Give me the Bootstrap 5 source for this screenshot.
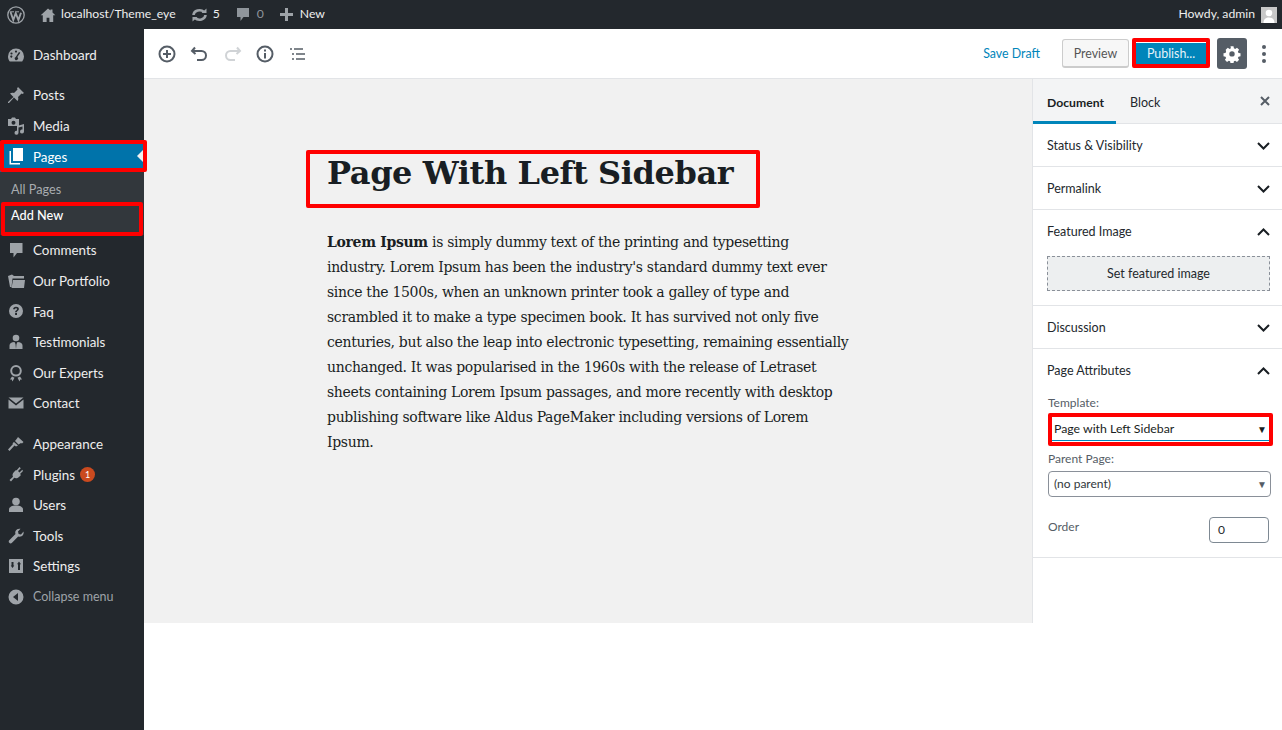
<!DOCTYPE html>
<html lang="en">
<head>
<meta charset="UTF-8">
<title>Add New Page</title>
<link href="https://cdn.jsdelivr.net/npm/bootstrap@5.3.0/dist/css/bootstrap.min.css" rel="stylesheet">
<style>
html, body { height: 730px; overflow: hidden; }
body { font-family: "Lato", "Open Sans", sans-serif; background: #fff; color: #23282d; position: relative; }
.admin-bar { height: 29px; background: #23282d; color: #eee; font-size: 12.2px; padding: 0 5px 0 7px; }
.admin-bar svg { display: block; flex: none; }
.bar-muted { color: #8f959b; }
.gap-home { margin-left: 14.5px; }
.gap-site { margin-left: 5.5px; }
.gap-item { margin-left: 15px; }
.gap-num { margin-left: 5px; }
.gap-icon { margin-left: 16px; }
.gap-after { margin-left: 7px; }
.gap-avatar { margin-left: 6px; }
.shell { height: 701px; }
.side-menu { width: 144px; background: #23282d; flex: none; padding-top: 11px; font-size: 13.4px; color: #eee; }
.menu-row { height: 30.6px; padding: 0 0 0 33px; position: relative; white-space: nowrap; }
.menu-row svg { position: absolute; left: 7px; top: 6px; width: 18px; height: 18px; fill: #9ea3a8; }
.menu-gap { height: 9.4px; }
.menu-gap-wide { height: 10px; }
.menu-row.is-current { background: #0073aa; color: #fff; height: 31px; }
.menu-row.is-current svg { fill: #fff; }
.menu-row.is-current::after { content: ""; position: absolute; right: 0; top: 8px; border: 7px solid transparent; border-right-color: #f1f1f1; border-left-width: 0; }
.sub-menu { background: #32373c; height: 63px; padding: 8px 0 0 11px; font-size: 12.7px; line-height: 18px; }
.sub-menu div:first-child { color: #a8acb0; margin-bottom: 8px; }
.sub-menu div:last-child { color: #fff; font-weight: 500; }
.plugin-count { width: 15px; height: 15px; border-radius: 50%; background: #ca4a1f; color: #fff; font-size: 9px; line-height: 15px; text-align: center; margin-left: 5px; }
.collapse-row { color: #9ea3a8; font-size: 12.5px; }
.editor { min-width: 0; }
.tool-bar { height: 50px; background: #fff; border-bottom: 1px solid #e2e4e7; padding: 0 16px 0 12px; flex: none; }
.tool-icons { gap: 10.5px; }
.tool-icons svg { width: 22px; height: 22px; fill: none; stroke: #555d66; stroke-width: 2; display: block; }
.tool-icons .icon-off { stroke: #d0d3d6; }
.tool-icons .icon-list { stroke-width: 1.7; }
.save-link { color: #0085ba; font-size: 12.4px; margin-right: 22px; padding-top: 1px; }
.preview-btn { height: 29px; width: 67px; font-size: 12.4px; color: #555; background: #f7f7f7; border: 1px solid #ccc; border-bottom-width: 2px; border-radius: 3px; padding-top: 2px; }
.publish-btn { height: 22px; width: 70px; font-size: 12.4px; color: #e6f3f9; background: #0085ba; margin-left: 7px; padding-top: 2px; }
.gear-btn { width: 30px; height: 31px; background: #555d66; border-radius: 3px; margin-left: 11px; }
.dots { width: 4px; margin-left: 15px; gap: 3px; }
.dots i { width: 4px; height: 4px; border-radius: 50%; background: #555d66; display: block; }
.work-area { height: 544px; background: #f1f1f1; flex: none; }
.canvas { min-width: 0; padding: 72px 0 0 183px; font-family: "DejaVu Serif", "Liberation Serif", serif; color: #191e23; }
.page-title { font-size: 32px; font-weight: 700; line-height: 44px; margin: 0 0 35px; letter-spacing: -.4px; white-space: nowrap; }
.page-copy { font-size: 14px; line-height: 25px; margin: 0; white-space: nowrap; letter-spacing: -.32px; }
.doc-panel { width: 250px; flex: none; background: #fff; border-left: 1px solid #e2e4e7; font-size: 12.5px; color: #23282d; }
.panel-tabs { height: 45px; background: #f3f4f5; border-bottom: 1px solid #e2e4e7; padding-right: 12px; }
.tab-on { width: 83px; height: 45px; padding: 15px 0 0 14px; border-bottom: 3px solid #0085ba; font-weight: 700; font-size: 12.2px; color: #191e23; }
.tab-off { padding: 15px 0 0 14px; }
.tab-close { margin-top: 17px; }
.panel-row { height: 43px; padding: 2px 12px 0 14px; border-bottom: 1px solid #e2e4e7; }
.panel-head { height: 43px; padding: 1px 12px 0 14px; }
.chev { width: 13px; height: 8px; fill: none; stroke: #191e23; stroke-width: 2; }
.panel-body { border-bottom: 1px solid #e2e4e7; }
.attr-body { height: 209px; }
.image-btn { height: 35px; margin: 3px 12px 14px 14px; background: #edeff0; border: 1px dashed #8a9099; color: #23282d; line-height: 33px; text-align: center; }
.field-label { font-size: 12px; color: #555d66; line-height: 16px; }
.label-template { padding: 3px 0 0 15px; }
.label-parent { padding: 10px 0 0 15px; }
.template-select { height: 25px; margin: 5px 13px 0 18px; border-bottom: 1px solid #0085ba; padding: 2px 2px 0 3px; font-size: 12.3px; color: #191e23; }
.parent-select { height: 26px; margin: 4px 11px 0 15px; border: 1px solid #8a9099; border-radius: 4px; padding: 0 3px 0 5px; font-size: 12px; color: #32373c; }
.select-arrow { font-size: 10px; }
.arrow-muted { color: #555d66; }
.order-row { padding: 20px 13px 0 15px; }
.order-label { margin-top: -7px; }
.order-input { width: 60px; height: 26px; border: 1px solid #7e8993; border-radius: 4px; padding-left: 8px; font-size: 12px; line-height: 24px; }
.red-mark { position: absolute; border: 4px solid #f00; border-radius: 2px; pointer-events: none; }
.mark-pages { left: 0; top: 140px; width: 147px; height: 32px; }
.mark-add { left: 1px; top: 202px; width: 142px; height: 34px; }
.mark-title { left: 306px; top: 150px; width: 454px; height: 58px; }
.mark-publish { left: 1132px; top: 38px; width: 78px; height: 30px; }
.mark-template { left: 1048px; top: 413px; width: 225px; height: 33px; }
</style>
</head>
<body>
<!-- Admin bar -->
<div class="admin-bar d-flex align-items-center">
  <svg width="18" height="18" viewBox="0 0 18 18" fill="none" stroke="#9ea3a8"><circle cx="9" cy="9" r="8.200" stroke-width="1.300"/><path d="M3.500 6l2.800 8 2.400-6.800L11.400 14l2.600-7.200" stroke-width="1.900"/><path d="M3 5.800h4M9 5.800h3" stroke-width="1"/></svg>
  <svg class="gap-home" width="16" height="16" viewBox="0 0 16 16" fill="#9ea3a8"><path d="M8 1.500L.7 8.300h2.100V15h3.800v-4.200h2.800V15h3.800V8.300h2.100L12.500 5.400V2.500h-2v1.100z"/></svg>
  <span class="gap-site">localhost/Theme_eye</span>
  <svg class="gap-item" width="17" height="16" viewBox="0 0 17 16" fill="none" stroke="#9ea3a8" stroke-width="2.600"><path d="M2.500 8a6 5 0 0 1 10.500-3M14.500 8a6 5 0 0 1-10.500 3"/><path d="M10.500 6h5V1.500zM6.500 10h-5v4.500z" fill="#9ea3a8" stroke="none"/></svg>
  <span class="gap-num">5</span>
  <svg class="gap-icon" width="14" height="15" viewBox="0 0 14 15" fill="#8f959b"><path d="M1 1h12v9H7.500L4.500 14v-4H1z"/></svg>
  <span class="bar-muted gap-after">0</span>
  <svg class="gap-icon" width="13" height="13" viewBox="0 0 13 13" fill="#9ea3a8"><path d="M5 0h3v5h5v3H8v5H5V8H0V5h5z"/></svg>
  <span class="gap-after">New</span>
  <span class="ms-auto">Howdy, admin</span>
  <svg class="gap-avatar" width="16" height="16" viewBox="0 0 16 16"><rect width="16" height="16" fill="#c8c8c8"/><circle cx="8" cy="6" r="3.300" fill="#fff"/><path d="M2.500 16c0-4 2.500-5.500 5.500-5.500s5.500 1.500 5.500 5.500z" fill="#fff"/></svg>
</div>

<div class="shell d-flex">
  <!-- Left menu -->
  <nav class="side-menu">
    <div class="menu-row d-flex align-items-center"><svg viewBox="0 0 18 18"><path d="M9 2.500a8 8 0 0 0-8 8c0 1.900.7 3.600 1.800 5h12.400a8 8 0 0 0 1.800-5 8 8 0 0 0-8-8zm0 2a1.100 1.100 0 1 1 0 2.200 1.100 1.100 0 0 1 0-2.200zM4.500 6.400a1.100 1.100 0 1 1 0 2.200 1.100 1.100 0 0 1 0-2.200zm8.800.3l-3 4.300a1.700 1.700 0 1 1-1.600-.100l3.300-5zM3.200 10.500a1.100 1.100 0 1 1 0 .1z"/></svg>Dashboard</div>
    <div class="menu-gap"></div>
    <div class="menu-row d-flex align-items-center"><svg viewBox="0 0 18 18"><path d="M11 1l6 6-1.500 1-1-.5L11 11c.6 1.500.3 3-.5 4L7 11.500 2 17l-1 0 0-1 5.500-5L3 7.500c1-.8 2.500-1.100 4-.5l3.500-3.500-.5-1z"/></svg>Posts</div>
    <div class="menu-row d-flex align-items-center"><svg viewBox="0 0 18 18"><path d="M1 2h3l1-1.500h3L9 2h3v7H1zm5.500 1.800a2 2 0 1 0 0 4 2 2 0 0 0 0-4zM17 7v7.500a2 2 0 1 1-1.500-1.900V9.500l-4 1v5.200a2 2 0 1 1-1.500-1.900V9z"/></svg>Media</div>
    <div class="menu-row is-current d-flex align-items-center"><svg viewBox="0 0 18 18"><path d="M6 1h10v13H6z"/><path d="M4 4v12h9v1.500H2.500V4z"/></svg>Pages</div>
    <div class="sub-menu"><div>All Pages</div><div>Add New</div></div>
    <div class="menu-row d-flex align-items-center"><svg viewBox="0 0 18 18"><path d="M3 2h12.500v10H10l-3.500 4.500V12H3z"/></svg>Comments</div>
    <div class="menu-row d-flex align-items-center"><svg viewBox="0 0 18 18"><path d="M1 4l4-1.500 2 1.500h10v2.500H5.500L4.500 15H3zM6 8h12l-1 8H4.500z"/></svg>Our Portfolio</div>
    <div class="menu-row d-flex align-items-center"><svg viewBox="0 0 18 18"><path fill-rule="evenodd" d="M9 2a7 7 0 1 1 0 14A7 7 0 0 1 9 2zm-.9 9v2h1.900v-2zM9 4.800c-1.700 0-2.800 1-2.900 2.500h1.800c.1-.6.500-1 1.100-1 .6 0 1 .4 1 .9 0 1-2 1.300-2 3h1.800c0-1.200 2.100-1.500 2.100-3.200 0-1.400-1.200-2.200-2.900-2.200z"/></svg>Faq</div>
    <div class="menu-row d-flex align-items-center"><svg viewBox="0 0 18 18"><circle cx="9" cy="5" r="3.300"/><path d="M2.500 16v-3.500c0-2 2-3.200 5-3.400l1 2 .5 5zM15.500 16v-3.500c0-2-2-3.200-5-3.400l-1 2-.5 5z"/></svg>Testimonials</div>
    <div class="menu-row d-flex align-items-center"><svg viewBox="0 0 18 18"><path fill-rule="evenodd" d="M9 1a5.800 5.800 0 1 1 0 11.600A5.800 5.800 0 0 1 9 1zm0 2a3.800 3.800 0 1 0 0 7.600A3.800 3.800 0 0 0 9 3zM5 12.500l2.500 1.200-2 3.800-.8-2H3zM13 12.500l-2.500 1.200 2 3.800.8-2H15z"/></svg>Our Experts</div>
    <div class="menu-row d-flex align-items-center"><svg viewBox="0 0 18 18"><path d="M1.500 3.500h15L9 9.500zM1.500 5.500v9h15v-9L9 11.500z"/></svg>Contact</div>
    <div class="menu-gap-wide"></div>
    <div class="menu-row d-flex align-items-center"><svg viewBox="0 0 18 18"><path d="M11 2l5.500 5-1.500 1.500-1-.5-2.500 1.500L8 6l2-2.500zM7 7l4 3.500-2 1-1.500-1L2.500 16 1 14.500l5-5.500-.5-.8z"/></svg>Appearance</div>
    <div class="menu-row d-flex align-items-center"><svg viewBox="0 0 18 18"><path d="M12.500 2l1.300 1.200-2.800 2.800 1.500 1.500 2.800-2.800L16 6l-3 3 1 1-2 2c-1.500 1.500-3.500 1.500-4.800.8L4 16.500l-1.500-1.500 3.500-3.200C5.300 10.500 5.300 8.500 7 7l2-2 .5.500z"/></svg>Plugins<span class="plugin-count">1</span></div>
    <div class="menu-row d-flex align-items-center"><svg viewBox="0 0 18 18"><circle cx="9" cy="5.500" r="3.800"/><path d="M2 16v-2.500C2 11 5 9.500 9 9.500s7 1.500 7 4V16z"/></svg>Users</div>
    <div class="menu-row d-flex align-items-center"><svg viewBox="0 0 18 18"><path d="M16.500 4.500c.5 2-.2 3.800-2 4.800-1.200.6-2.400.6-3.300.2L5 15.800c-.8.800-2 .8-2.700 0-.8-.8-.7-1.900 0-2.600l6.200-6.100c-.4-1-.4-2.200.2-3.300 1-1.800 2.800-2.500 4.800-2l-2.500 2.700.6 2.500 2.400.6z"/></svg>Tools</div>
    <div class="menu-row d-flex align-items-center"><svg viewBox="0 0 18 18"><path fill-rule="evenodd" d="M2 2h14v14H2zm2.500 3v3.500H3.700l1.800 2.500 1.800-2.500h-.8V5zM12 4.500l-2 2.700h1V13h2V7.200h1z"/></svg>Settings</div>
    <div class="menu-row collapse-row d-flex align-items-center"><svg viewBox="0 0 18 18"><path fill-rule="evenodd" d="M9 1.500a7.500 7.500 0 1 1 0 15 7.500 7.500 0 0 1 0-15zM11 5L6 9l5 4z"/></svg>Collapse menu</div>
  </nav>

  <div class="editor flex-grow-1 d-flex flex-column">
    <!-- Top toolbar -->
    <div class="tool-bar d-flex align-items-center">
      <div class="tool-icons d-flex align-items-center">
        <svg viewBox="0 0 22 22"><circle cx="11" cy="11" r="7.500"/><path d="M11 7v8M7 11h8"/></svg>
        <svg viewBox="0 0 22 22"><path d="M6 4.500L3 8l3.500 3M3.500 8h9a4 4 0 0 1 0 9H8"/></svg>
        <svg class="icon-off" viewBox="0 0 22 22"><path d="M16 4.500L19 8l-3.500 3M18.500 8h-9a4 4 0 0 0 0 9H14"/></svg>
        <svg viewBox="0 0 22 22"><circle cx="11" cy="11" r="7.500"/><path d="M11 10v5.500M11 6.500v2"/></svg>
        <svg class="icon-list" viewBox="0 0 22 22"><path d="M4 6h2M8 6h9M6 11h2M10 11h9M6 16h2M10 16h9"/></svg>
      </div>
      <span class="save-link ms-auto">Save Draft</span>
      <div class="preview-btn d-flex align-items-center justify-content-center">Preview</div>
      <div class="publish-btn d-flex align-items-center justify-content-center">Publish...</div>
      <div class="gear-btn d-flex align-items-center justify-content-center">
        <svg width="18" height="18" viewBox="0 0 18 18" fill="#fff"><path fill-rule="evenodd" d="M7.500 1.200h3l.4 2.100 1.300.6 1.800-1.200 2.100 2.100-1.200 1.800.6 1.300 2 .4v3l-2 .4-.6 1.300 1.200 1.800-2.100 2.100-1.800-1.200-1.300.6-.4 2h-3l-.4-2-1.300-.6-1.800 1.200-2.100-2.100 1.200-1.800-.6-1.300-2-.4v-3l2-.4.6-1.300L2.700 4.800l2.100-2.100 1.800 1.200 1.300-.6zM9 6.200a2.700 2.700 0 1 0 0 5.400 2.700 2.700 0 0 0 0-5.400z"/></svg>
      </div>
      <div class="dots d-flex flex-column"><i></i><i></i><i></i></div>
    </div>

    <div class="work-area d-flex">
      <!-- Page content -->
      <div class="canvas flex-grow-1">
        <h1 class="page-title">Page With Left Sidebar</h1>
        <p class="page-copy"><strong>Lorem Ipsum</strong> is simply dummy text of the printing and typesetting<br>industry. Lorem Ipsum has been the industry's standard dummy text ever<br>since the 1500s, when an unknown printer took a galley of type and<br>scrambled it to make a type specimen book. It has survived not only five<br>centuries, but also the leap into electronic typesetting, remaining essentially<br>unchanged. It was popularised in the 1960s with the release of Letraset<br>sheets containing Lorem Ipsum passages, and more recently with desktop<br>publishing software like Aldus PageMaker including versions of Lorem<br>Ipsum.</p>
      </div>

      <!-- Document settings -->
      <aside class="doc-panel">
        <div class="panel-tabs d-flex align-items-start">
          <div class="tab-on">Document</div>
          <div class="tab-off">Block</div>
          <svg class="ms-auto tab-close" width="10" height="10" viewBox="0 0 10 10" fill="none" stroke="#555d66" stroke-width="2"><path d="M1 1l8 8M9 1l-8 8"/></svg>
        </div>
        <div class="panel-row d-flex align-items-center justify-content-between">Status &amp; Visibility<svg class="chev" viewBox="0 0 13 8"><path d="M1 1l5.500 5.500L12 1"/></svg></div>
        <div class="panel-row d-flex align-items-center justify-content-between">Permalink<svg class="chev" viewBox="0 0 13 8"><path d="M1 1l5.500 5.500L12 1"/></svg></div>
        <div class="panel-body">
          <div class="panel-head d-flex align-items-center justify-content-between">Featured Image<svg class="chev" viewBox="0 0 13 8"><path d="M1 7l5.500-5.500L12 7"/></svg></div>
          <div class="image-btn">Set featured image</div>
        </div>
        <div class="panel-row d-flex align-items-center justify-content-between">Discussion<svg class="chev" viewBox="0 0 13 8"><path d="M1 1l5.500 5.500L12 1"/></svg></div>
        <div class="panel-body attr-body">
          <div class="panel-head d-flex align-items-center justify-content-between">Page Attributes<svg class="chev" viewBox="0 0 13 8"><path d="M1 7l5.500-5.500L12 7"/></svg></div>
          <div class="field-label label-template">Template:</div>
          <div class="template-select d-flex align-items-center justify-content-between"><span>Page with Left Sidebar</span><span class="select-arrow">▼</span></div>
          <div class="field-label label-parent">Parent Page:</div>
          <div class="parent-select d-flex align-items-center justify-content-between"><span>(no parent)</span><span class="select-arrow arrow-muted">▼</span></div>
          <div class="order-row d-flex align-items-center justify-content-between"><span class="field-label order-label">Order</span><div class="order-input">0</div></div>
        </div>
      </aside>
    </div>
  </div>
</div>

<!-- Red annotation boxes drawn over the screenshot -->
<div class="red-mark mark-pages"></div>
<div class="red-mark mark-add"></div>
<div class="red-mark mark-title"></div>
<div class="red-mark mark-publish"></div>
<div class="red-mark mark-template"></div>
<script src="https://cdn.jsdelivr.net/npm/bootstrap@5.3.0/dist/js/bootstrap.bundle.min.js"></script>
</body>
</html>
